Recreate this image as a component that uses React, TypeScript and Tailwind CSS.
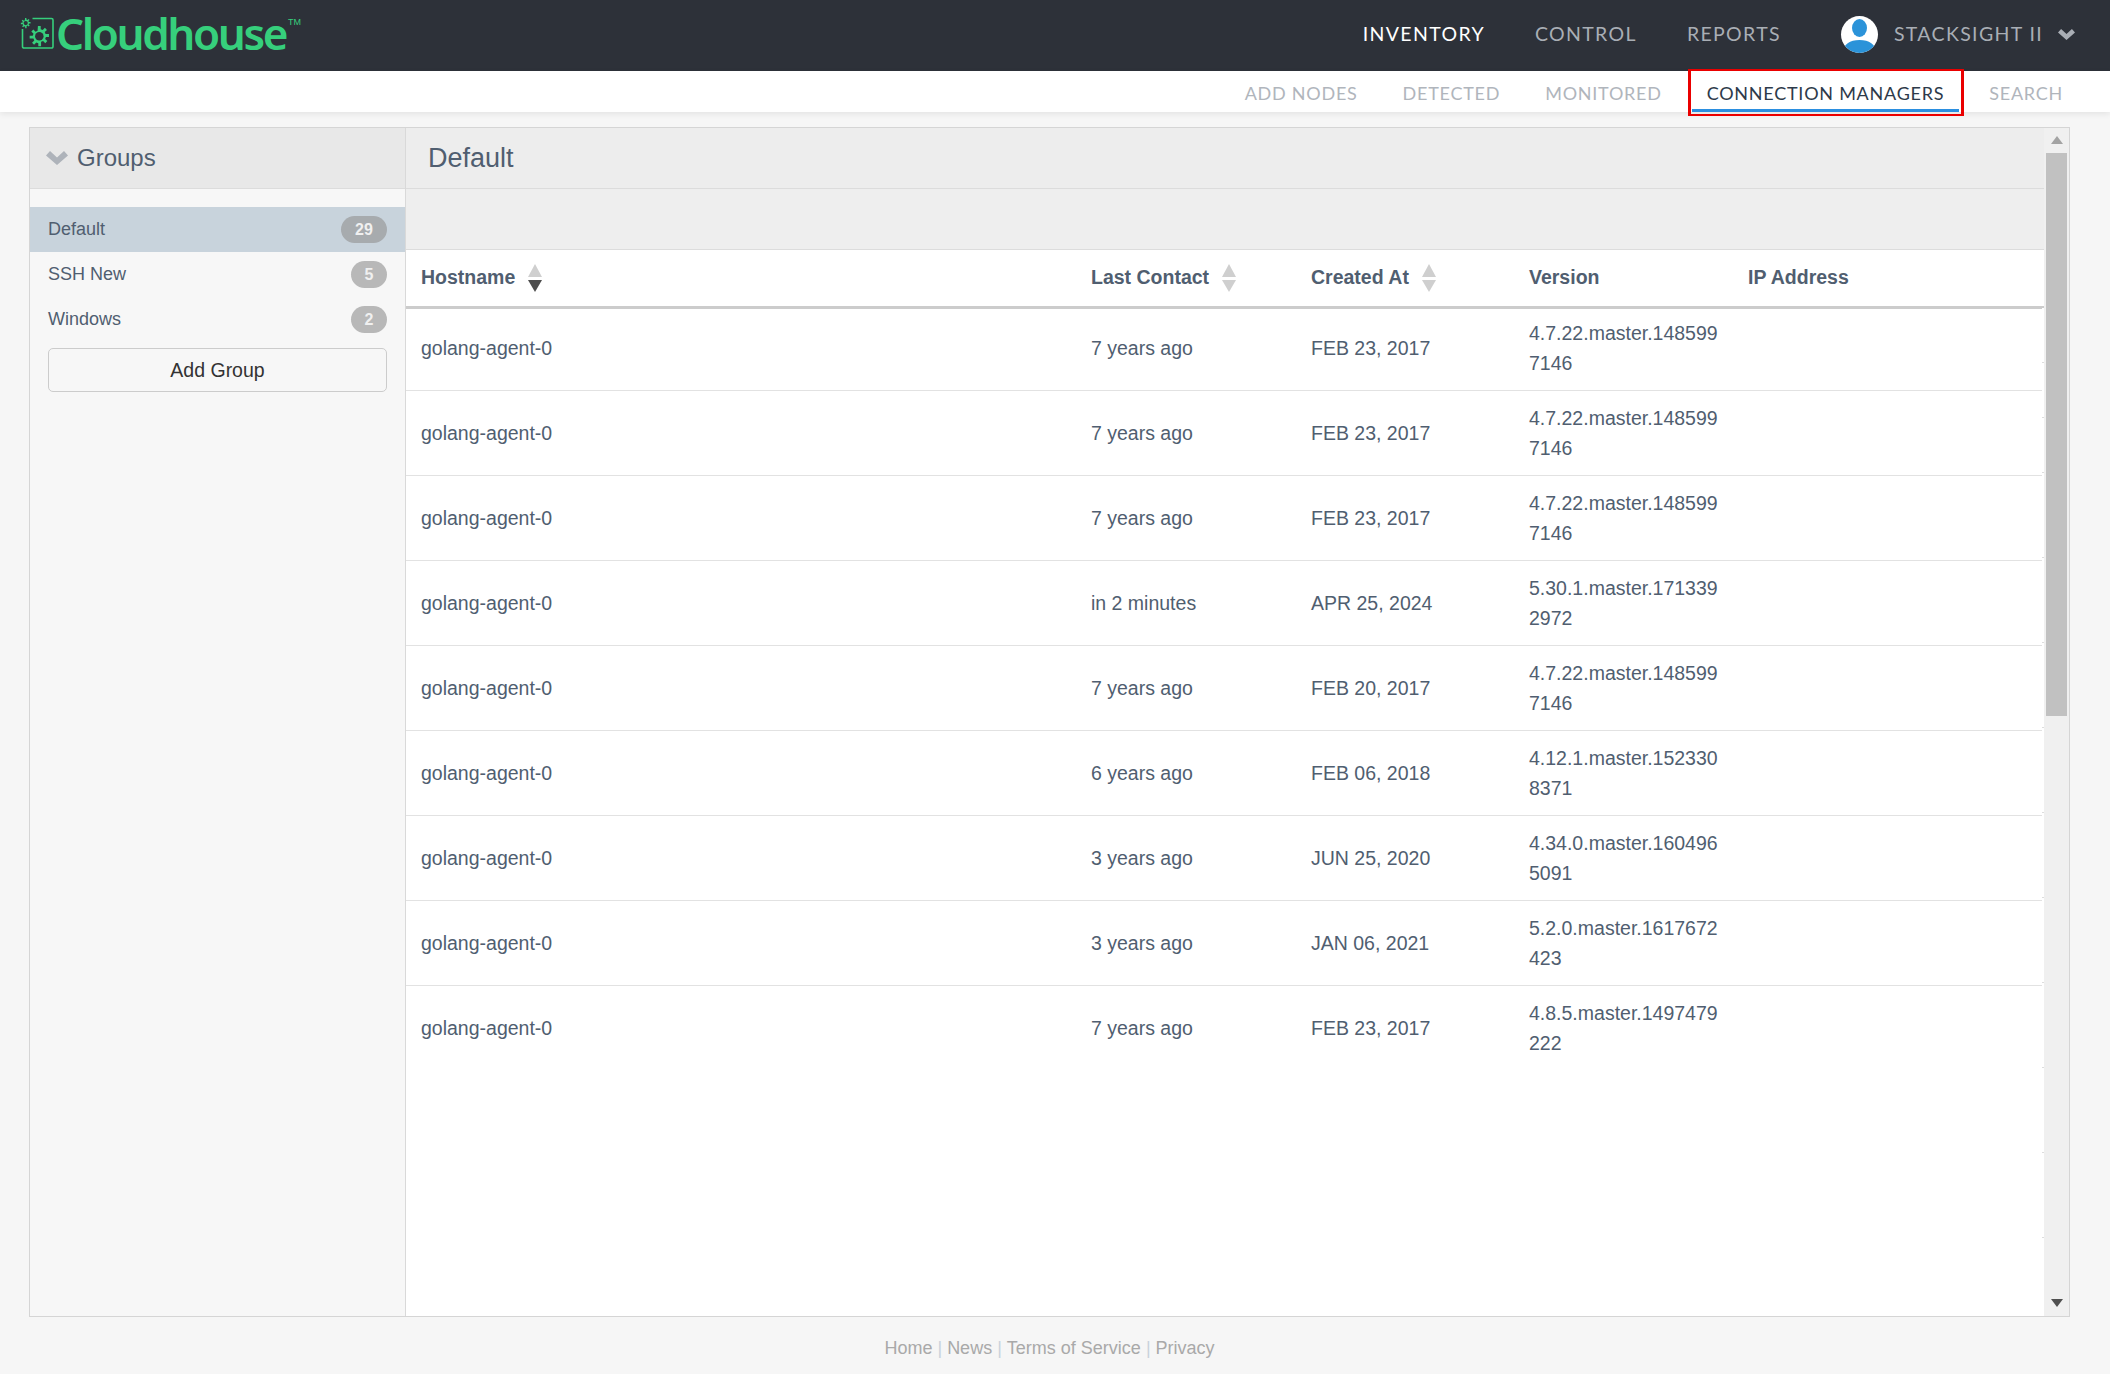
const rows = [
  ["golang-agent-0", "7 years ago", "FEB 23, 2017", "4.7.22.master.1485997146"],
  ["golang-agent-0", "7 years ago", "FEB 23, 2017", "4.7.22.master.1485997146"],
  ["golang-agent-0", "7 years ago", "FEB 23, 2017", "4.7.22.master.1485997146"],
  ["golang-agent-0", "in 2 minutes", "APR 25, 2024", "5.30.1.master.1713392972"],
  ["golang-agent-0", "7 years ago", "FEB 20, 2017", "4.7.22.master.1485997146"],
  ["golang-agent-0", "6 years ago", "FEB 06, 2018", "4.12.1.master.1523308371"],
  ["golang-agent-0", "3 years ago", "JUN 25, 2020", "4.34.0.master.1604965091"],
  ["golang-agent-0", "3 years ago", "JAN 06, 2021", "5.2.0.master.1617672423"],
  ["golang-agent-0", "7 years ago", "FEB 23, 2017", "4.8.5.master.1497479222"],
]

const groups = [
  { name: "Default", count: 29, active: true },
  { name: "SSH New", count: 5, active: false },
  { name: "Windows", count: 2, active: false },
]

// the gaps between the little row ticks at the table's right edge
const ticks = [55, 55, 55, 85, 85, 85, 85, 85, 85, 85, 85, 85]

function LogoMark() {
  const gear = "M12 1h3v3.400l2.200.9 2.400-2.400 2.200 2.200-2.400 2.400.9 2.200H24v3h-3.300l-.9 2.200 2.400 2.400-2.200 2.200-2.400-2.400-2.200.9V23h-3v-3.300l-2.200-.9-2.400 2.400-2.200-2.200 2.400-2.400-.9-2.200H3v-3h3.300l.9-2.200-2.400-2.400 2.200-2.200 2.400 2.400 2.200-.9z"
  return (
    <svg width="34" height="34" viewBox="0 0 34 34" className="shrink-0 overflow-visible">
      <path d="M11.500 1.500H30.500a1.500 1.500 0 0 1 1.500 1.500v26.500a1.500 1.500 0 0 1-1.500 1.500H3a1.500 1.500 0 0 1-1.500-1.500V12" fill="none" stroke="#36cf7c" strokeWidth="1.6" />
      <g transform="translate(5.900 8.200) scale(0.92)">
        <path d={gear} fill="#36cf7c" />
        <circle cx="13.500" cy="12" r="4.600" fill="#2d3139" />
      </g>
      <g transform="translate(-1.500 0.600) scale(0.46)">
        <path d={gear} fill="#36cf7c" />
        <circle cx="13.500" cy="12" r="4.600" fill="#2d3139" />
      </g>
    </svg>
  )
}

function Chevron({ width, height, color }: { width: number; height: number; color: string }) {
  return (
    <svg width={width} height={height} viewBox="0 0 22 14" preserveAspectRatio="none" className="shrink-0">
      <path d="M0 4.500L4 0l7 6.500L18 0l4 4.500L11 14z" fill={color} />
    </svg>
  )
}

function SortArrows({ active }: { active?: boolean }) {
  return (
    <svg width="14" height="28" viewBox="0 0 14 28" className="shrink-0">
      <path d="M7 0l7 13H0z" fill="#cfcfcf" />
      <path d="M0 16h14l-7 12z" fill={active ? "#4d4d4d" : "#cfcfcf"} />
    </svg>
  )
}

export default function App() {
  return (
    <div className="flex h-[1374px] flex-col overflow-hidden bg-[#f6f6f6] font-['Liberation_Sans',Arial,sans-serif] text-[#505e70]">
      <header className="flex h-[71px] shrink-0 items-center bg-[#2d3139]">
        <div className="mb-[4px] ml-[21px] flex items-center">
          <LogoMark />
          <span className="mb-[2px] ml-[1px] font-['Noto_Sans',sans-serif] text-[44px] leading-none font-semibold tracking-[-2.4px] text-[#36cf7c]">Cloudhouse</span>
          <span className="mb-[22px] ml-[2px] text-[9px] leading-none text-[#36cf7c]">TM</span>
        </div>
        <nav className="mb-[3px] ml-auto flex items-center font-['Lato',sans-serif] text-[19.5px] tracking-[1.35px] text-[#a9aeb5]">
          <span className="text-white">INVENTORY</span>
          <span className="ml-[50px]">CONTROL</span>
          <span className="ml-[50px]">REPORTS</span>
          <span className="ml-[60px] flex h-[37px] w-[37px] items-end justify-center overflow-hidden rounded-full bg-white">
            <svg width="37" height="37" viewBox="0 0 37 37">
              <ellipse cx="18.500" cy="12" rx="7.500" ry="9" fill="#2b93d9" />
              <path d="M2 37c0-9 7-13 16.500-13S35 28 35 37z" fill="#2b93d9" />
            </svg>
          </span>
          <span className="ml-[16px]">STACKSIGHT II</span>
          <span className="mr-[35px] ml-[15px]">
            <Chevron width={17} height={11} color="#a9aeb5" />
          </span>
        </nav>
      </header>

      <div className="relative z-10 flex h-[41px] shrink-0 items-center justify-end gap-[15px] bg-white pt-[3px] pr-[32px] font-['Lato',sans-serif] text-[18px] tracking-[0.75px] text-[#b0b5bc] shadow-[0_2px_6px_rgba(0,0,0,0.08)]">
        <span className="px-[15px]">ADD NODES</span>
        <span className="px-[15px]">DETECTED</span>
        <span className="px-[15px]">MONITORED</span>
        <span className="relative flex h-[38px] items-center px-[15px] text-[#2d3a4a]">
          CONNECTION MANAGERS
          <span className="absolute right-0 bottom-0 left-0 h-[3px] bg-[#2b8fe0]" />
          <span className="absolute -top-[5px] -right-[5px] -bottom-[4px] -left-[4px] border-x-[3px] border-y-[2px] border-[#ea0000]" />
        </span>
        <span className="px-[15px]">SEARCH</span>
      </div>

      <main className="flex-1 px-[29px] pt-[15px]">
        <div className="flex h-[1190px] w-[2041px] border border-[#d5d5d5] bg-white">
          <aside className="flex w-[376px] shrink-0 flex-col border-r border-[#d9d9d9] bg-[#f7f7f7]">
            <div className="flex h-[61px] shrink-0 items-center border-b border-[#dcdcdc] bg-[#e8e8e8] pl-[16px]">
              <Chevron width={22} height={14} color="#aeb3ba" />
              <span className="ml-[9px] text-[24px]">Groups</span>
            </div>
            <ul className="mt-[18px] text-[18px]">
              {groups.map((g) => (
                <li key={g.name} className={`flex h-[45px] items-center justify-between pr-[18px] pl-[18px] ${g.active ? "bg-[#c8d3dc]" : ""}`}>
                  <span>{g.name}</span>
                  <span className={`flex h-[27px] items-center justify-center rounded-full text-[16px] font-bold text-[#f0f0f0] ${g.active ? "w-[46px] bg-[#a7abae]" : "w-[36px] bg-[#b8b8b8]"}`}>
                    {g.count}
                  </span>
                </li>
              ))}
            </ul>
            <button type="button" className="mx-[18px] mt-[6px] flex h-[44px] items-center justify-center rounded-[5px] border border-[#cccccc] bg-[#f7f7f7] pt-[1px] text-[19.5px] text-[#333333]">
              Add Group
            </button>
          </aside>

          <section className="flex min-w-0 flex-1 flex-col">
            <div className="flex h-[61px] shrink-0 items-center border-b border-[#dcdcdc] bg-[#ededed] pt-[1px] pl-[22px] text-[27px]">Default</div>
            <div className="flex min-h-0 flex-1">
              <div className="relative min-w-0 flex-1">
                <div className="h-[61px] border-b border-[#dcdcdc] bg-[#eeeeee]" />
                <table className="w-full table-fixed border-collapse text-left text-[19.5px]">
                  <colgroup>
                    <col className="w-[671px]" />
                    <col className="w-[220px]" />
                    <col className="w-[218px]" />
                    <col className="w-[219px]" />
                    <col />
                  </colgroup>
                  <thead>
                    <tr className="h-[57px] border-b-[3px] border-[#cccccc]">
                      <th className="pr-[14px] pl-[15px]">
                        <span className="flex items-center gap-[13px]">Hostname<SortArrows active /></span>
                      </th>
                      <th className="px-[14px]">
                        <span className="flex items-center gap-[13px]">Last Contact<SortArrows /></span>
                      </th>
                      <th className="px-[14px]">
                        <span className="flex items-center gap-[13px]">Created At<SortArrows /></span>
                      </th>
                      <th className="px-[14px]">Version</th>
                      <th className="px-[14px]">IP Address</th>
                    </tr>
                  </thead>
                  <tbody>
                    {rows.map((r, i) => (
                      <tr key={i} className={`border-b border-[#e2e2e2] leading-[30px] last:border-b-0 ${i === 0 ? "h-[83px]" : "h-[85px]"}`}>
                        <td className={`pr-[14px] pl-[15px] ${i === 0 ? "pb-[3px]" : ""}`}>{r[0]}</td>
                        <td className={`px-[14px] ${i === 0 ? "pb-[3px]" : ""}`}>{r[1]}</td>
                        <td className={`px-[14px] ${i === 0 ? "pb-[3px]" : ""}`}>{r[2]}</td>
                        <td className={`px-[14px] break-all ${i === 0 ? "pb-[3px]" : ""}`}>{r[3]}</td>
                        <td className="px-[14px]" />
                      </tr>
                    ))}
                  </tbody>
                </table>
                <div className="absolute top-[119px] right-0 w-[2px] bg-white">
                  {ticks.map((h, i) => (
                    <div key={i} className="border-b border-[#dddddd]" style={{ height: h }} />
                  ))}
                </div>
              </div>
              <div className="-mt-[61px] flex w-[25px] shrink-0 flex-col items-center bg-[#f0f0f0]">
                <svg width="12" height="8" viewBox="0 0 12 8" className="mt-[8px] shrink-0">
                  <path d="M6 0l6 8H0z" fill="#a3a3a3" />
                </svg>
                <div className="mt-[9px] h-[563px] w-[21px] shrink-0 bg-[#c1c1c1]" />
                <svg width="12" height="8" viewBox="0 0 12 8" className="mt-auto mb-[9px] shrink-0">
                  <path d="M0 0h12L6 8z" fill="#505050" />
                </svg>
              </div>
            </div>
          </section>
        </div>
      </main>

      <footer className="flex h-[57px] shrink-0 items-center justify-center pt-[6px] pr-[11px] text-[18px] text-[#a9a9a9]">
        <span>Home</span>
        <span className="mx-[5px] text-[#c9d2dc]">|</span>
        <span>News</span>
        <span className="mx-[5px] text-[#c9d2dc]">|</span>
        <span>Terms of Service</span>
        <span className="mx-[5px] text-[#c9d2dc]">|</span>
        <span>Privacy</span>
      </footer>
    </div>
  )
}
